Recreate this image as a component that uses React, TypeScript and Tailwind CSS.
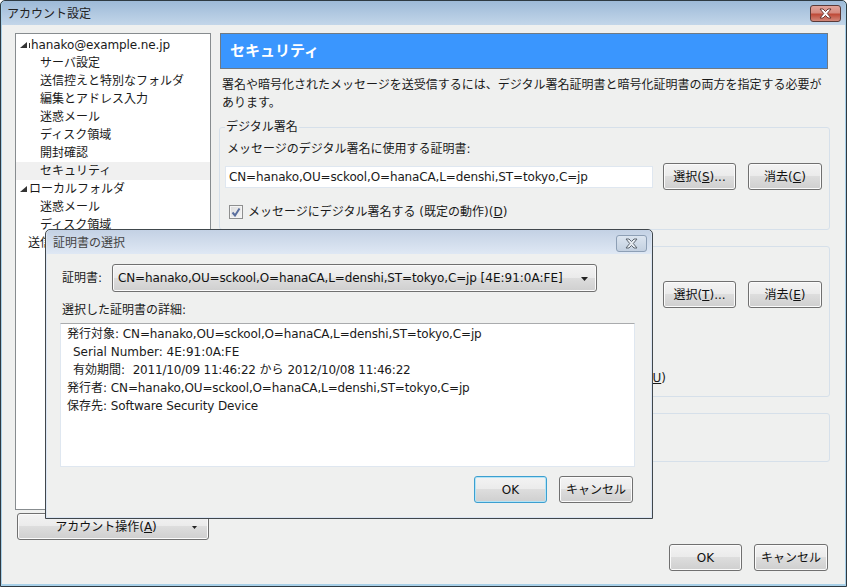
import type { ReactNode } from 'react'

const buttonBase =
  "flex items-center justify-center rounded-[3px] border bg-[linear-gradient(#f3f3f3_0%,#ebebeb_48%,#dddddd_50%,#cfcfcf_100%)] text-[#111]"
const normalEdge = 'border-[#707070] shadow-[inset_0_0_0_1px_#fbfbfb]'
const focusedEdge = 'border-[#3c9fd0] shadow-[inset_0_0_0_1px_#b4e4f6]'

function WinButton({ children, width, focused }: { children: ReactNode; width: string; focused?: boolean }) {
  return (
    <button className={`${buttonBase} ${focused ? focusedEdge : normalEdge} ${width} h-[27px] shrink-0`}>
      {children}
    </button>
  )
}

function CloseGlyph({ fill, stroke }: { fill: string; stroke: string }) {
  return (
    <svg width="13" height="11" viewBox="0 0 13 11">
      <path
        d="M1 1h3l2.500 2.500L9 1h3L8.300 5.500 12 10H9L6.500 7.500 4 10H1l3.700-4.500z"
        fill={fill}
        stroke={stroke}
        strokeWidth="1"
      />
    </svg>
  )
}

function TreeRow({ label, selected, indent }: { label: string; selected?: boolean; indent?: boolean }) {
  return (
    <div className={`h-[18px] leading-[18px] ${indent ? 'pl-[24px]' : ''} ${selected ? 'bg-[#f0f0f0]' : ''}`}>
      {label}
    </div>
  )
}

function TreeParent({ children }: { children: ReactNode }) {
  return (
    <div className="flex items-center h-[18px] leading-[18px] pl-[4px]">
      <svg width="7" height="6" viewBox="0 0 7 6" className="shrink-0 mr-[2px]">
        <polygon points="7,0 7,6 0,6" fill="#333" />
      </svg>
      {children}
    </div>
  )
}

function Group({ legend, height, children }: { legend?: string; height: string; children?: ReactNode }) {
  return (
    <fieldset className={`${height} border border-[#d6e0ea] rounded-[3px] overflow-hidden`}>
      <legend className="ml-[5px] px-[1px] h-[18px] leading-[18px]">{legend}</legend>
      {children}
    </fieldset>
  )
}

function CertName() {
  return <span className="tracking-[-0.14px]">CN=hanako,OU=sckool,O=hanaCA,L=denshi,ST=tokyo,C=jp</span>
}

export default function App() {
  return (
    <div className="relative w-[847px] h-[587px] overflow-hidden bg-[#a8d0e8] border border-[#2e3a42] rounded-t-[5px] text-[12px] text-[#1a1a1a] font-['DejaVu_Sans','Noto_Sans_CJK_JP',sans-serif]">
      {/* Main window */}
      <div className="flex flex-col h-full px-[1px] pb-[2px]">
        <div className="flex justify-between h-[24px] shrink-0 bg-[linear-gradient(#9dbad8,#c3d6e9)] pl-[5px] pr-[4px] rounded-t-[4px]">
          <span className="leading-[26px] text-[#222]">アカウント設定</span>
          <div className="mt-[4px] w-[31px] h-[17px] rounded-[3px] border border-[#5a3a38] flex items-center justify-center bg-[linear-gradient(#e2a49a_0%,#d58b80_45%,#bf4a38_55%,#d2887a_100%)]">
            <CloseGlyph fill="#fff" stroke="#6b3a34" />
          </div>
        </div>

        <div className="flex flex-1 bg-[#eff0ef] pl-[13px] pt-[8px]">
          {/* Left column */}
          <div className="w-[196px] shrink-0">
            <div className="h-[477px] border border-[#878c8f] bg-white pt-[2px] overflow-hidden">
              <TreeParent>
                <span className="inline-block w-[1px] h-[5px] bg-[#333] mr-[1px] mt-[1px]" />
                <span className="tracking-[-0.1px]">hanako@example.ne.jp</span>
              </TreeParent>
              <TreeRow indent label="サーバ設定" />
              <TreeRow indent label="送信控えと特別なフォルダ" />
              <TreeRow indent label="編集とアドレス入力" />
              <TreeRow indent label="迷惑メール" />
              <TreeRow indent label="ディスク領域" />
              <TreeRow indent label="開封確認" />
              <TreeRow indent selected label="セキュリティ" />
              <TreeParent>ローカルフォルダ</TreeParent>
              <TreeRow indent label="迷惑メール" />
              <TreeRow indent label="ディスク領域" />
              <div className="h-[18px] leading-[18px] pl-[12px]">送信</div>
            </div>
            <button className={`${buttonBase} ${normalEdge} relative ml-[2px] mt-[3px] w-[192px] h-[27px]`}>
              <span className="mr-[14px]">
                アカウント操作(<u>A</u>)
              </span>
              <svg width="5" height="3" viewBox="0 0 5 3" className="absolute right-[11px] top-[12px]">
                <polygon points="0,0 5,0 2.500,3" fill="#222" />
              </svg>
            </button>
          </div>

          {/* Right column */}
          <div className="ml-[8px] w-[611px] shrink-0">
            <div className="ml-[1px] w-[608px] h-[36px] bg-[#3a96fe] border border-[#6f7a84] flex items-center pl-[9px] text-white text-[15px] font-bold">
              セキュリティ
            </div>
            <p className="mt-[7px] ml-[3px] leading-[18px] w-[600px]">
              署名や暗号化されたメッセージを送受信するには、デジタル署名証明書と暗号化証明書の両方を指定する必要があります。
            </p>

            <div className="mt-[6px] flex flex-col gap-[7px]">
              <Group legend="デジタル署名" height="h-[112px]">
                <div className="mt-[4px] ml-[7px] h-[18px] leading-[18px]">メッセージのデジタル署名に使用する証明書:</div>
                <div className="mt-[5px] ml-[5px] flex items-center">
                  <div className="w-[428px] h-[22px] leading-[21px] bg-white border border-[#dfe7f0] pl-[3px]">
                    <CertName />
                  </div>
                  <div className="ml-[10px]">
                    <WinButton width="w-[73px]">
                      選択(<u>S</u>)...
                    </WinButton>
                  </div>
                  <div className="ml-[12px]">
                    <WinButton width="w-[74px]">
                      消去(<u>C</u>)
                    </WinButton>
                  </div>
                </div>
                <div className="mt-[13px] ml-[9px] flex items-center h-[18px]">
                  <div className="w-[14px] h-[14px] border border-[#8e8f8f] bg-[linear-gradient(135deg,#dcdcdc,#f6f6f6)] flex items-center justify-center shadow-[inset_0_0_0_1px_#f4f4f4]">
                    <svg width="10" height="10" viewBox="0 0 10 10">
                      <path d="M1.500 5.500 4 8.500 8.500 1.500" fill="none" stroke="#5a6f9e" strokeWidth="2" />
                    </svg>
                  </div>
                  <span className="ml-[5px]">
                    メッセージにデジタル署名する (既定の動作)(<u>D</u>)
                  </span>
                </div>
              </Group>

              <Group height="h-[160px]">
                <div className="mt-[26px] ml-[5px] flex items-center">
                  <div className="w-[428px] h-[22px] bg-white border border-[#dfe7f0]" />
                  <div className="ml-[10px]">
                    <WinButton width="w-[73px]">
                      選択(<u>T</u>)...
                    </WinButton>
                  </div>
                  <div className="ml-[12px]">
                    <WinButton width="w-[74px]">
                      消去(<u>E</u>)
                    </WinButton>
                  </div>
                </div>
                <div className="mt-[61px] ml-[5px] w-[441px] h-[18px] leading-[18px] text-right whitespace-nowrap">
                  (<u>U</u>)
                </div>
              </Group>

              <Group height="h-[58px]" />
            </div>

            <div className="mt-[82px] flex justify-end gap-[12px] pr-[2px]">
              <WinButton width="w-[73px]">OK</WinButton>
              <WinButton width="w-[74px]">キャンセル</WinButton>
            </div>
          </div>
        </div>
      </div>

      {/* Certificate dialog */}
      <div className="absolute left-[44px] top-[228px] w-[608px] h-[290px] border border-[#40474c] rounded-t-[5px] bg-[#dbe5f3] p-[1px] pt-0 flex flex-col">
        <div className="flex justify-between h-[24px] shrink-0 bg-[linear-gradient(#c3d1e4,#dfe8f4)] pl-[6px] pr-[4px] rounded-t-[4px]">
          <span className="leading-[26px] text-[#444]">証明書の選択</span>
          <div className="mt-[5px] w-[31px] h-[17px] rounded-[3px] border border-[#8d9fb5] flex items-center justify-center bg-[linear-gradient(#dce5f0,#c3d0e0)]">
            <CloseGlyph fill="#e8edf3" stroke="#5d6670" />
          </div>
        </div>
        <div className="flex-1 bg-[#eff0ef] pl-[13px] pr-[15px] pt-[10px]">
          <div className="flex items-center ml-[2px]">
            <span className="w-[50px]">証明書:</span>
            <div className={`${buttonBase} ${normalEdge} relative !justify-start w-[485px] h-[28px] pl-[5px]`}>
              <span>
                <CertName /> [4E:91:0A:FE]
              </span>
              <svg width="7" height="4" viewBox="0 0 7 4" className="absolute right-[8px] top-[12px]">
                <polygon points="0,0 7,0 3.500,4" fill="#222" />
              </svg>
            </div>
          </div>
          <div className="mt-[9px] ml-[2px] h-[18px] leading-[18px]">選択した証明書の詳細:</div>
          <div className="mt-[4px] w-[575px] h-[144px] bg-white border border-[#dfe7f0] border-t-[#a9abad] pl-[6px] pt-[1px] leading-[18px]">
            <div>
              発行対象: <CertName />
            </div>
            <div className="pl-[6px]">Serial Number: 4E:91:0A:FE</div>
            <div className="pl-[6px]">
              有効期間:&nbsp; <span className="tracking-[-0.2px]">2011/10/09 11:46:22</span> から{' '}
              <span className="tracking-[-0.2px]">2012/10/08 11:46:22</span>
            </div>
            <div>
              発行者: <CertName />
            </div>
            <div>
              保存先: <span className="tracking-[-0.15px]">Software Security Device</span>
            </div>
          </div>
          <div className="mt-[9px] flex justify-end gap-[12px] pr-[3px]">
            <WinButton width="w-[73px]" focused>
              OK
            </WinButton>
            <WinButton width="w-[74px]">キャンセル</WinButton>
          </div>
        </div>
      </div>
    </div>
  )
}
